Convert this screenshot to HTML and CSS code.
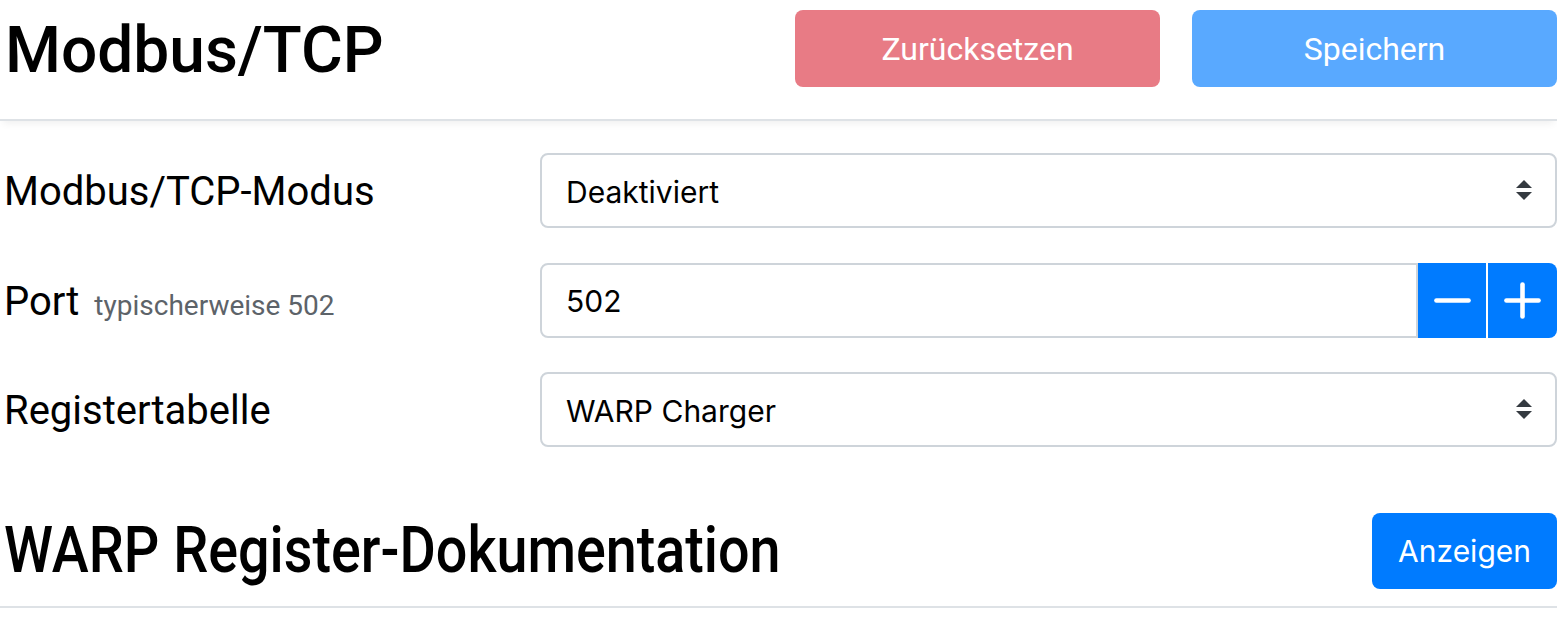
FILE: index.html
```html
<!DOCTYPE html>
<html lang="de">
<head>
<meta charset="utf-8">
<title>Modbus/TCP</title>
<link rel="stylesheet" href="styles.css">
</head>
<body>
<header class="page-header">
  <h1 class="page-title">Modbus/TCP</h1>
  <div class="header-actions">
    <button class="btn btn-danger-disabled" type="button">Zurücksetzen</button>
    <button class="btn btn-primary-disabled" type="button">Speichern</button>
  </div>
</header>

<form class="settings">
  <div class="form-row">
    <label class="form-label">Modbus/TCP-Modus</label>
    <div class="select-wrap">
      <select class="form-control">
        <option>Deaktiviert</option>
      </select>
      <svg class="select-arrow" viewBox="0 0 4 5" width="16" height="20"><path d="M2 0L0 2h4zm0 5L0 3h4z" fill="#343a40"/></svg>
    </div>
  </div>
  <div class="form-row">
    <label class="form-label">Port <small class="muted">typischerweise 502</small></label>
    <div class="input-group">
      <input class="form-control group-input" type="text" value="502">
      <button class="step-btn step-minus" type="button" aria-label="minus">
        <svg viewBox="0 0 24 24" width="55" height="55"><line x1="5" y1="12" x2="19" y2="12"/></svg>
      </button>
      <button class="step-btn step-plus" type="button" aria-label="plus">
        <svg viewBox="0 0 24 24" width="55" height="55"><line x1="12" y1="5" x2="12" y2="19"/><line x1="5" y1="12" x2="19" y2="12"/></svg>
      </button>
    </div>
  </div>
  <div class="form-row">
    <label class="form-label">Registertabelle</label>
    <div class="select-wrap">
      <select class="form-control">
        <option>WARP Charger</option>
      </select>
      <svg class="select-arrow" viewBox="0 0 4 5" width="16" height="20"><path d="M2 0L0 2h4zm0 5L0 3h4z" fill="#343a40"/></svg>
    </div>
  </div>
</form>

<section class="doc-section">
  <h2 class="section-title">WARP Register-Dokumentation</h2>
  <button class="btn btn-primary" type="button">Anzeigen</button>
</section>
</body>
</html>
```

FILE: styles.css
```css
* { box-sizing: border-box; }

body {
  margin: 0;
  padding-left: 4px;
  font-family: Roboto, "Liberation Sans", sans-serif;
  color: #000;
  background: #fff;
}

.page-header {
  display: flex;
  align-items: center;
  justify-content: space-between;
  height: 121px;
  margin-left: -4px;
  padding: 10px 0 32px 5px;
  border-bottom: 2px solid #dee2e6;
  box-shadow: 0 5px 8px -3px rgba(0, 0, 0, 0.07);
}

.page-title {
  margin: 4px 0 0;
  font-size: 64px;
  font-weight: 500;
  line-height: 72px;
}

.header-actions {
  display: flex;
  gap: 32px;
}

.btn {
  border: 0;
  border-radius: 8px;
  color: #fff;
  cursor: pointer;
  line-height: 1.5;
}

.btn-danger-disabled,
.btn-primary-disabled {
  width: 365px;
  height: 77px;
  font-family: Roboto, "Liberation Sans", sans-serif;
  font-size: 32px;
}

.btn-danger-disabled { background: #e87b85; }
.btn-primary-disabled { background: #59a9ff; }

.settings {
  display: flex;
  flex-direction: column;
  gap: 34.5px;
  margin-top: 32px;
}

.form-row {
  display: flex;
  align-items: center;
}

.form-label {
  flex: 0 0 536px;
  padding-top: 3px;
  font-size: 40px;
  line-height: 1.2;
}

.muted {
  margin-left: 5px;
  font-size: 28px;
  color: #5d6369;
}

.select-wrap {
  position: relative;
  flex: 1;
}

.form-control {
  display: block;
  width: 100%;
  height: 75px;
  padding: 13px 24px 11px;
  font-family: Inter, "Noto Sans", sans-serif;
  font-size: 30px;
  color: #000;
  background: #fff;
  border: 2px solid #ced4da;
  border-radius: 8px;
  appearance: none;
  -webkit-appearance: none;
  outline: none;
}

.select-arrow {
  position: absolute;
  right: 25px;
  top: 27px;
  pointer-events: none;
}

.input-group {
  flex: 1;
  display: flex;
}

.group-input {
  flex: 1;
  border-top-right-radius: 0;
  border-bottom-right-radius: 0;
}

.step-btn {
  display: flex;
  align-items: center;
  justify-content: center;
  height: 75px;
  padding: 0;
  border: 0;
  background: #007bff;
  cursor: pointer;
}

.step-btn svg {
  stroke: #fff;
  stroke-width: 2;
  stroke-linecap: round;
  fill: none;
}

.step-minus { width: 68px; }

.step-plus {
  width: 69px;
  margin-left: 2px;
  border-top-right-radius: 8px;
  border-bottom-right-radius: 8px;
}

.doc-section {
  display: flex;
  align-items: center;
  justify-content: space-between;
  margin-top: 66px;
  margin-left: -4px;
  padding-left: 4px;
  padding-bottom: 16px;
  border-bottom: 2px solid #dee2e6;
}

.section-title {
  margin: 0;
  font-size: 64px;
  font-weight: 500;
  line-height: 1.2;
  transform: scaleX(0.87);
  transform-origin: left center;
}

.btn-primary {
  height: 76px;
  padding: 0 26px;
  font-family: Inter, "Noto Sans", sans-serif;
  font-size: 30px;
  background: #007bff;
}
```
